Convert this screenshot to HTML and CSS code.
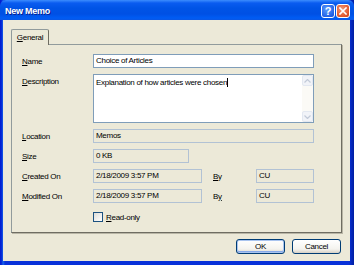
FILE: index.html
```html
<!DOCTYPE html>
<html lang="en">
<head>
  <meta charset="UTF-8">
  <title>New Memo</title>
  <link rel="stylesheet" href="styles.css">
</head>
<body>

  <div class="window">
    <div class="titlebar">
      <span class="title">New Memo</span>
      <div class="caption-btns">
        <span class="cap-btn help">?</span>
        <span class="cap-btn close">
          <svg width="8" height="8" viewBox="0 0 8 8"><path d="M1 1 L7 7 M7 1 L1 7" stroke="#fff" stroke-width="1.6" stroke-linecap="square"/></svg>
        </span>
      </div>
    </div>

    <div class="client">
      <div class="tabs">
        <div class="tab active"><u>G</u>eneral</div>
      </div>

      <div class="panel">
        <div class="form">
          <label><u>N</u>ame</label>
          <div class="field">Choice of Articles</div>

          <label class="top"><u>D</u>escription</label>
          <div class="field memo">
            <div class="memo-text">Explanation of how articles were chosen<span class="caret"></span></div>
            <div class="scrollbar">
              <span class="sb-btn"><svg width="7" height="4" viewBox="0 0 7 4"><path d="M0.5 3.5 L3.5 0.5 L6.5 3.5" fill="none" stroke="#c2cad8" stroke-width="1.2"/></svg></span>
              <span class="sb-track"></span>
              <span class="sb-btn"><svg width="7" height="4" viewBox="0 0 7 4"><path d="M0.5 0.5 L3.5 3.5 L6.5 0.5" fill="none" stroke="#c2cad8" stroke-width="1.2"/></svg></span>
            </div>
          </div>

          <label><u>L</u>ocation</label>
          <div class="field disabled">Memos</div>

          <label><u>S</u>ize</label>
          <div class="field disabled size">0 KB</div>

          <label><u>C</u>reated On</label>
          <div class="pair">
            <div class="field disabled">2/18/2009 3:57 PM</div>
            <label class="by"><u>B</u>y</label>
            <div class="field disabled">CU</div>
          </div>

          <label><u>M</u>odified On</label>
          <div class="pair">
            <div class="field disabled">2/18/2009 3:57 PM</div>
            <label class="by">B<u>y</u></label>
            <div class="field disabled">CU</div>
          </div>

          <span></span>
          <label class="check"><span class="box"></span><span><u>R</u>ead-only</span></label>
        </div>
      </div>

      <div class="buttons">
        <button class="btn default">OK</button>
        <button class="btn">Cancel</button>
      </div>
    </div>
  </div>

</body>
</html>
```

FILE: styles.css
```css
:root {
  --face: #ece9d8;
  --frame: #0842d8;
  --tab-border: #919b9c;
  --input-border: #7f9db9;
  --disabled-border: #b2c2d4;
}

* {
  margin: 0;
  padding: 0;
  box-sizing: border-box;
}

body {
  width: 354px;
  height: 265px;
  overflow: hidden;
  font-family: 'Liberation Sans', Arial, sans-serif;
  font-size: 8px;
  letter-spacing: -0.3px;
  color: #000;
}

u {
  text-decoration: underline;
  text-underline-offset: 1px;
}

.window {
  height: 265px;
  display: flex;
  flex-direction: column;
  background: linear-gradient(90deg, #0019cf 0, #0831d9 2px, #166aee 3px, #0831d9 5px, #0831d9 calc(100% - 5px), #001ea0 100%);
}

/* Title bar */
.titlebar {
  height: 20px;
  flex: none;
  display: flex;
  align-items: center;
  justify-content: space-between;
  padding: 0 4px 0 5px;
  background: linear-gradient(#3c8dfe 0, #0a5cf0 3px, #0054e6 8px, #0050e4 14px, #005cf4 18px, #0b57e4 20px);
  border-radius: 6px 6px 0 0;
}

.title {
  color: #fff;
  font-weight: bold;
  font-size: 9px;
  letter-spacing: -0.25px;
  text-shadow: 1px 1px #0a1e8c;
  padding-top: 1px;
}

.caption-btns {
  display: flex;
  gap: 1px;
  padding-top: 1px;
}

.cap-btn {
  width: 14px;
  height: 14px;
  border: 1px solid #fff;
  border-radius: 3px;
  display: flex;
  align-items: center;
  justify-content: center;
  color: #fff;
  font-weight: bold;
  font-size: 11px;
}

.help {
  background: radial-gradient(circle at 40% 35%, #5c9dff, #2463e6 70%, #1a4fd0);
}

.close {
  background: radial-gradient(circle at 40% 35%, #f29a7a, #e25a2f 65%, #c8431c);
}

/* Client area */
.client {
  flex: 1;
  margin: 0 4px 4px 3px;
  background: var(--face);
  display: flex;
  flex-direction: column;
  padding: 9px 8px 7px 8px;
}

.tabs {
  display: flex;
  height: 15px;
  position: relative;
  z-index: 1;
}

.tab {
  width: 38px;
  height: 16px;
  border: 1px solid var(--tab-border);
  border-bottom: none;
  border-right-color: #6f6d62;
  border-radius: 2px 2px 0 0;
  background: var(--face);
  display: flex;
  justify-content: center;
  padding-top: 3px;
}

.panel {
  flex: 1;
  border: 1px solid var(--tab-border);
  border-right-color: #6f6d62;
  border-bottom-color: #6f6d62;
  box-shadow: 1px 1px 0 #b9b6a6;
  background: var(--face);
}

.form {
  display: grid;
  grid-template-columns: 71px 1fr;
  row-gap: 6px;
  padding: 9px 27px 0 10px;
  align-items: center;
}

.form > label.top {
  align-self: start;
  padding-top: 3px;
}

.field {
  height: 14px;
  line-height: 12px;
  border: 1px solid var(--input-border);
  background: #fff;
  padding: 0 2px;
  white-space: nowrap;
  overflow: hidden;
}

.field.disabled {
  border-color: var(--disabled-border);
  background: var(--face);
}

.field.size {
  width: 96px;
}

.memo {
  height: 49px;
  display: flex;
  padding: 0 0 0 2px;
}

.memo-text {
  flex: 1;
  padding-top: 2px;
}

.caret {
  display: inline-block;
  width: 1px;
  height: 9px;
  background: #000;
  vertical-align: -2px;
}

.scrollbar {
  width: 11px;
  display: flex;
  flex-direction: column;
  background: #fbfaf6;
}

.sb-btn {
  height: 11px;
  border: 1px solid #e3e8f1;
  border-radius: 2px;
  background: #f1f3f8;
  display: flex;
  align-items: center;
  justify-content: center;
}

.sb-track {
  flex: 1;
}

.pair {
  display: grid;
  grid-template-columns: 109px 1fr 58px;
  align-items: center;
}

.by {
  padding-left: 11px;
}

.check {
  margin-top: 3px;
  display: flex;
  align-items: center;
  gap: 3px;
}

.box {
  width: 10px;
  height: 10px;
  border: 1px solid #1c5180;
  background: linear-gradient(135deg, #dcdcd7, #fff);
}

/* Buttons */
.buttons {
  margin-top: 6px;
  display: flex;
  justify-content: flex-end;
  gap: 7px;
  padding-right: 1px;
}

.btn {
  width: 49px;
  height: 15px;
  border: 1px solid #003c74;
  border-radius: 3px;
  background: linear-gradient(#fff, #f4f3ee 70%, #d6d0c5);
  font-family: inherit;
  font-size: 8px;
  letter-spacing: -0.3px;
  color: #000;
}

.btn.default {
  box-shadow: inset 0 0 0 1px #a9c4ef, inset 0 -1px 0 1px #86a8e8;
}
```
